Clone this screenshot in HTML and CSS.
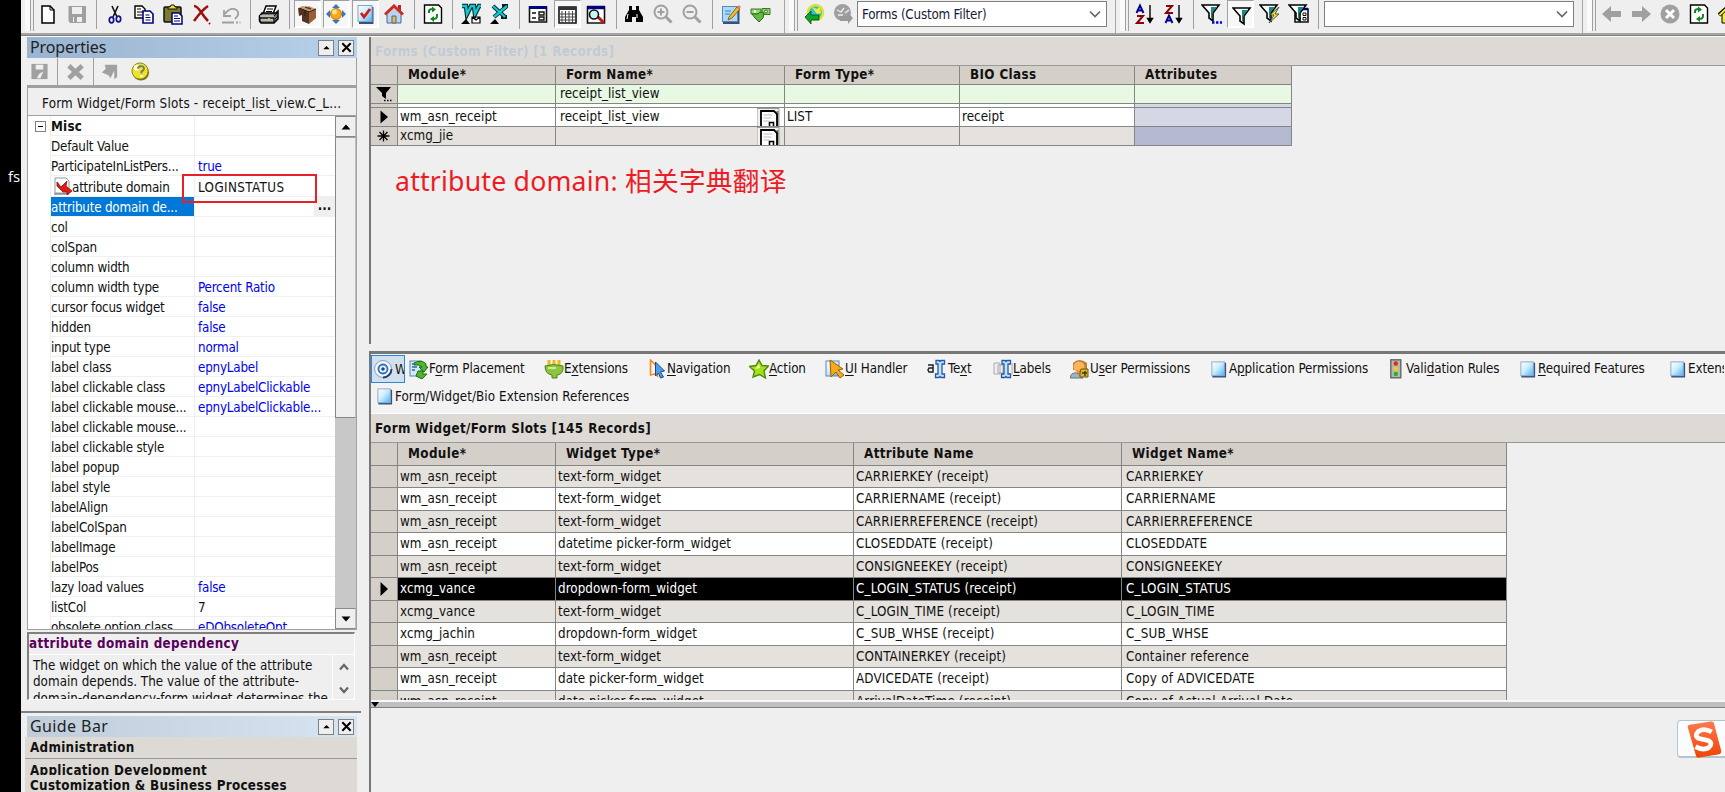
FILE: index.html
```
<!DOCTYPE html>
<html lang="en">
<head>
<meta charset="utf-8">
<title>Forms</title>
<link rel="stylesheet" href="styles.css">
</head>
<body>
<svg class="defs" width="0" height="0">
  <defs>
    <linearGradient id="sky" x1="0" y1="0" x2="1" y2="1"><stop offset="0" stop-color="#fff"/><stop offset=".45" stop-color="#cfeeff"/><stop offset="1" stop-color="#4ab4f4"/></linearGradient>
    <linearGradient id="orange" x1="0" y1="0" x2="0" y2="1"><stop offset="0" stop-color="#ff7a4a"/><stop offset="1" stop-color="#f04308"/></linearGradient>
    <symbol id="sheet" viewBox="0 0 20 20"><path d="M3 18.500h14.500V3" fill="none" stroke="#3a4f7c" stroke-width="2"/><rect x="2.500" y="2" width="14" height="15.500" fill="url(#sky)" stroke="#86a3c0"/></symbol>
    <symbol id="reload" viewBox="0 0 20 20"><path d="M1.500 1h14l3 3v15h-17z" fill="#fff" stroke="#000" stroke-width="1.400"/><path d="M6 9V7q0-2 4-2M14 10v2q0 3-4 3" fill="none" stroke="#0b8a1e" stroke-width="2"/><path d="M9 2.500l4 3-4 3zM11 12l-4 3 4 3z" fill="#0b8a1e"/></symbol>
    <symbol id="house" viewBox="0 0 20 20"><path d="M3 9v10h14V9l-7-7z" fill="#b9d4ee" stroke="#4a688d"/><path d="M1 10.500L10 2l9 8.500" fill="none" stroke="#d12a1d" stroke-width="3"/><path d="M14 1h3v6l-3-3z" fill="#b3241a"/><path d="M8 12h4v7H8z" fill="#e8b64c" stroke="#4a688d"/></symbol>
    <symbol id="funnel" viewBox="0 0 20 20"><path d="M1 2h17l-6 8v8l-4-3v-5z" fill="#fff" stroke="#000" stroke-width="1.600"/><path d="M10 4h6l-5 6v6l-1-1z" fill="#138a8a"/></symbol>
    <symbol id="note" viewBox="0 0 23 18"><path d="M0 18V.5h22V18" fill="#f2f2f2" stroke="#999"/><path d="M20.500 3v15" stroke="#777" stroke-width="2"/><path d="M4 18V3h13l3 3v12" fill="#fff" stroke="#000" stroke-width="1.800"/><path d="M6.500 7h9M6.500 10h8M6.500 13h6" stroke="#bbb"/><path d="M12.500 18v-3.500h4V18" fill="#fff" stroke="#000" stroke-width="1.600"/></symbol>
  </defs>
</svg>
<div class="desktop"><span class="desktop-label">fs</span></div>
<div class="app">
  <header class="toolbars">
    <div class="bar bar-main">
      <i class="grip"></i>
      <span class="tool"><svg viewBox="0 0 20 20"><path d="M4 2h8l4 4v13H4z" fill="#fff" stroke="#000" stroke-width="1.500"/><path d="M12 2v4h4" fill="none" stroke="#000"/></svg></span>
      <span class="tool"><svg viewBox="0 0 20 20"><path d="M1.500 2h17.500v17H3l-1.500-2z" fill="#a0a0a0"/><path d="M5 3h10v7H5z" fill="#efefef"/><path d="M6 13h9v5H6z" fill="#efefef"/><path d="M7 13h3v5H7z" fill="#a0a0a0"/></svg></span>
      <i class="sep"></i>
      <span class="tool"><svg viewBox="0 0 20 20"><path d="M7 2l5 11M13 2L8 13" stroke="#111" stroke-width="1.600"/><g fill="none" stroke="#11118c" stroke-width="1.700"><ellipse cx="6.500" cy="16" rx="2.200" ry="2.800"/><ellipse cx="13.500" cy="15" rx="2.200" ry="2.800"/></g></svg></span>
      <span class="tool"><svg viewBox="0 0 20 20"><g fill="#fff"><path d="M1 2h7l3 3v9H1z" stroke="#000" stroke-width="1.400"/><path d="M9 7h7l3 3v9H9z" stroke="#00007c" stroke-width="1.600"/></g><path d="M3 5h4M3 8h6M3 11h5" stroke="#000"/><path d="M11.500 11h4M11.500 13.500h5M11.500 16h5" stroke="#00007c"/></svg></span>
      <span class="tool"><svg viewBox="0 0 20 20"><rect x="1" y="3" width="17" height="15" rx="1" fill="#7b7b2e" stroke="#111" stroke-width="1.500"/><path d="M5 5V3h2l1-2h3l1 2h2v2z" fill="#e9e03e" stroke="#111"/><path d="M9 9h7l3 3v8H9z" fill="#fff" stroke="#00007c" stroke-width="1.500"/><path d="M11 12h4M11 14.500h6M11 17h6" stroke="#00007c"/></svg></span>
      <span class="tool"><svg viewBox="0 0 20 20"><path d="M2 2q3 0 7 6 4 6 7 9M16 2Q10 6 2 17" fill="none" stroke="#9c1010" stroke-width="2.500"/><path d="M17 19l1 1" stroke="#9c1010" stroke-width="2"/></svg></span>
      <span class="tool"><svg viewBox="0 0 20 20"><path d="M3 6v6h7M4 10q4-6 9-5 5 1 4 6l-3 4" fill="none" stroke="#a0a0a0" stroke-width="1.800"/><path d="M1 18.500h12M15 18.500h2M18.500 18.500h1" stroke="#a0a0a0" stroke-width="2"/></svg></span>
      <i class="sep"></i>
      <span class="tool"><svg viewBox="0 0 20 20"><path d="M7 2h10l-3 8H4z" fill="#fff" stroke="#000" stroke-width="1.500"/><path d="M8 5h6M7 7.500h6" stroke="#000"/><path d="M3 9h14l2-2v8l-4 4H2l-1.500-2v-5z" fill="#777" stroke="#000" stroke-width="1.500"/><path d="M1 12h14M2 16h12" stroke="#fff"/><path d="M1 14h14v4M15 12l4-4M16 15l3-3" stroke="#000" fill="none"/><circle cx="10" cy="15" r="1" fill="#e8e12c"/></svg></span>
      <i class="sep"></i>
      <span class="tool on"><svg viewBox="0 0 20 20"><path d="M1 5l4-3 5 1 2-1 7 3-7 5z" fill="#c59a72"/><path d="M1 4l4 1 7 3v12L5 17v-6l-3 1z" fill="#523423"/><path d="M12 8l7-3v9l-7 6z" fill="#9a5d35"/><path d="M2 4l10 4 7-3M8 7v5" stroke="#2e1b10" fill="none"/><path d="M8 3l6 2" stroke="#5a3a22" stroke-width="1.500"/></svg></span>
      <span class="tool on"><svg viewBox="0 0 20 20"><path d="M10 0l4 4H6zM10 20l4-4H6zM0 10l4-4v8zM20 10l-4-4v8z" fill="#3d76c0"/><circle cx="10" cy="10" r="5.500" fill="#f6a71c" stroke="#c9750a"/><circle cx="8.500" cy="8" r="2.500" fill="#ffe390"/></svg></span>
      <span class="tool on"><svg viewBox="0 0 20 20"><path d="M4 19h13.500V3" fill="none" stroke="#3a4f7c" stroke-width="2"/><rect x="3" y="1.500" width="14" height="16" fill="url(#sky)" stroke="#86a3c0"/><path d="M6 9l3 4 6-8" fill="none" stroke="#d21a16" stroke-width="2.800"/></svg></span>
      <span class="tool"><svg viewBox="0 0 20 20"><use href="#house"/></svg></span>
      <i class="sep"></i>
      <span class="tool"><svg viewBox="0 0 20 20"><use href="#reload"/></svg></span>
      <i class="sep"></i>
      <span class="tool"><svg viewBox="0 0 20 20"><path d="M1 2h4l1 8 4-8h3l1 8 4-8h2" fill="none" stroke="#022" stroke-width="4.500"/><path d="M1 2h4l1 8 4-8h3l1 8 4-8h2" fill="none" stroke="#12c6d2" stroke-width="2.400"/><path d="M5 15l4 5H0z"/><path d="M11 13h8v6h-8zM11 13l4 3 4-3" fill="#fff" stroke="#000" stroke-width="1.200"/></svg></span>
      <span class="tool"><svg viewBox="0 0 20 20"><path d="M3 2l12 11M17 2L4 13M12 2h6M11 13h6" fill="none" stroke="#022" stroke-width="4"/><path d="M3 2l12 11M17 2L4 13" stroke="#12c6d2" stroke-width="2.300"/><path d="M5 15l4 5H0z"/></svg></span>
      <i class="sep"></i>
      <span class="tool"><svg viewBox="0 0 20 20"><path d="M1.500 3h17v15h-17z" fill="#fff" stroke="#111" stroke-width="1.600"/><path d="M1 3.500h18" stroke="#00007c" stroke-width="3"/><path d="M4 9h4M4 14h4" stroke="#111" stroke-width="1.500"/><path d="M11 8h5v3h-5zM11 13h5v3h-5z" fill="none" stroke="#111" stroke-width="1.400"/></svg></span>
      <span class="tool on"><svg viewBox="0 0 20 20"><path d="M2 3h17v16H2z" fill="#fff" stroke="#111" stroke-width="1.600"/><path d="M2 4.500h17" stroke="#333" stroke-width="3"/><path d="M5 7v12M8.500 7v12M12 7v12M15.500 7v12M2 10h17M2 13h17M2 16h17" stroke="#444"/></svg></span>
      <span class="tool"><svg viewBox="0 0 20 20"><path d="M1.500 3h17v16h-17z" fill="#fff" stroke="#111" stroke-width="1.600"/><path d="M1 3.500h18" stroke="#00007c" stroke-width="3.500"/><path d="M12 13l6 6" stroke="#c01515" stroke-width="3"/><circle cx="8" cy="10.500" r="4.500" fill="#c9f5f5" stroke="#111" stroke-width="1.600"/></svg></span>
      <i class="sep"></i>
      <span class="tool"><svg viewBox="0 0 20 20"><path d="M5 2h3v4h4V2h3v4l4 7v5h-7v-5H8v5H1v-5l4-7z"/><path d="M4 10l-1 5M13 10v4" stroke="#fff"/></svg></span>
      <span class="tool"><svg viewBox="0 0 20 20"><circle cx="8" cy="8" r="6.500" fill="none" stroke="#a0a0a0" stroke-width="2"/><path d="M12.500 12.500l6 6" stroke="#a0a0a0" stroke-width="3"/><path d="M8 4.500v7M4.500 8h7" stroke="#a0a0a0" stroke-width="2"/></svg></span>
      <span class="tool"><svg viewBox="0 0 20 20"><circle cx="8" cy="8" r="6.500" fill="none" stroke="#a0a0a0" stroke-width="2"/><path d="M12.500 12.500l6 6" stroke="#a0a0a0" stroke-width="3"/><path d="M4.500 8h7" stroke="#a0a0a0" stroke-width="2"/></svg></span>
      <i class="sep"></i>
      <span class="tool"><svg viewBox="0 0 20 20"><path d="M2 19h15.500V4" fill="none" stroke="#3a4f7c" stroke-width="2"/><rect x="1.500" y="2.500" width="15" height="15" fill="#a9dcfa" stroke="#5b87b8"/><path d="M4 7h6M4 10h5" stroke="#397cc0"/><path d="M8 13L16 3l3 2-8 9-4 2z" fill="#f3b72c" stroke="#77500a" stroke-width=".8"/><path d="M16 3l2-2 2 2-1.500 2z" fill="#ed7b8a"/></svg></span>
      <span class="tool"><svg viewBox="0 0 20 20"><path d="M1 5h10v5H1zM12 4.500h8v6h-8z" fill="#8dd86e" stroke="#3a7526"/><circle cx="16" cy="7.500" r="1.500" fill="#e6f8b8" stroke="#3a7526"/><path d="M2 10h6l2-2 4 1-1 5-4 4-4-4z" fill="#63b943" stroke="#2f6a1e"/><circle cx="5" cy="7.500" r="1.300" fill="#efffe0"/></svg></span>
    </div>
    <div class="bar bar-view">
      <i class="grip"></i>
      <span class="tool"><svg viewBox="0 0 20 20"><circle cx="11.500" cy="8.500" r="7.500" fill="#29c6d2" stroke="#e4e02b" stroke-width="2.500"/><path d="M8 3l5 2 3-2 1 6-4 1-3-4z" fill="#efe93b"/><path d="M1 13l6-6v4h8v5H7v4z" fill="#12a32c" stroke="#064d10" stroke-width=".8"/></svg></span>
      <span class="tool"><svg viewBox="0 0 20 20"><circle cx="9.500" cy="8.500" r="8.500" fill="#a0a0a0"/><path d="M4 6l4 2 3-4M12 9l4-3M5 11h5" stroke="#eee" stroke-width="1.300" fill="none"/><path d="M20 14l-5-5v3H7v5h8v3z" fill="#999"/></svg></span>
      <div class="combo"><span>Forms (Custom Filter)</span><svg class="chev" viewBox="0 0 12 8"><path d="M1 1.500l5 5 5-5" fill="none" stroke="#666" stroke-width="1.700"/></svg></div>
    </div>
    <div class="bar bar-filter">
      <i class="grip"></i>
      <span class="tool"><svg viewBox="0 0 20 20"><path d="M1.500 9L5 1.500 8.500 9M3 6.500h4" fill="none" stroke="#00008c" stroke-width="1.900"/><path d="M2 12h6l-6 7h7" fill="none" stroke="#8c0000" stroke-width="2"/><path d="M15 1v15M12.500 14.500l2.500 4 2.500-4z" stroke="#000" stroke-width="1.400"/></svg></span>
      <span class="tool"><svg viewBox="0 0 20 20"><path d="M2 2h6L2 9h7" fill="none" stroke="#8c0000" stroke-width="2"/><path d="M1.500 19L5 11.500 8.500 19M3 16.500h4" fill="none" stroke="#00008c" stroke-width="1.900"/><path d="M15 1v15M12.500 14.500l2.500 4 2.500-4z" stroke="#000" stroke-width="1.400"/></svg></span>
      <i class="sep"></i>
      <span class="tool"><svg viewBox="0 0 20 20"><svg x="-1" y="-1" width="18" height="17"><use href="#funnel"/></svg><path d="M10 18.500h2.500M14 18.500h2.500M18 18.500h2" stroke="#00e" stroke-width="2.500"/></svg></span>
      <span class="tool on"><svg viewBox="0 0 20 20"><svg x="1" y="2" width="18" height="17"><use href="#funnel"/></svg></svg></span>
      <span class="tool"><svg viewBox="0 0 20 20"><svg x="-1" y="-1" width="14" height="14"><use href="#funnel"/></svg><path d="M19 3l-9 8h4l-5 8 10-9h-4z" fill="#f5ec21" stroke="#444" stroke-width=".9"/></svg></span>
      <span class="tool"><svg viewBox="0 0 20 20"><path d="M6 5h13v13H6z" fill="#fff" stroke="#111" stroke-width="1.600"/><path d="M6 5h13" stroke="#00007c" stroke-width="2.500"/><path d="M8 10h4M8 14.500h4" stroke="#111"/><path d="M14 9h3v2.500h-3zM14 13.500h3V16h-3z" fill="none" stroke="#111"/><svg x="-1" y="-1" width="14" height="14"><use href="#funnel"/></svg></svg></span>
      <i class="sep"></i>
      <div class="combo"><span></span><svg class="chev" viewBox="0 0 12 8"><path d="M1 1.500l5 5 5-5" fill="none" stroke="#666" stroke-width="1.700"/></svg></div>
    </div>
    <div class="bar bar-nav">
      <i class="grip"></i>
      <span class="tool"><svg viewBox="0 0 20 20"><path d="M0 10l9-8v5h10v6H9v5z" fill="#a0a0a0"/></svg></span>
      <span class="tool"><svg viewBox="0 0 20 20"><path d="M20 10l-9-8v5H1v6h10v5z" fill="#a0a0a0"/></svg></span>
      <span class="tool"><svg viewBox="0 0 20 20"><circle cx="10" cy="10" r="9.500" fill="#a0a0a0"/><path d="M6 6l8 8M14 6l-8 8" stroke="#fff" stroke-width="3"/></svg></span>
      <span class="tool"><svg viewBox="0 0 20 20"><use href="#reload"/></svg></span>
      <span class="tool"><svg viewBox="0 0 20 20"><path d="M4 10v9h13v-9l-6-7z" fill="#f2ea2c" stroke="#000"/><path d="M1 11l10-9 9 9" fill="none" stroke="#000" stroke-width="4"/><path d="M1.500 11l9.500-9 9 9" fill="none" stroke="#f2ea2c" stroke-width="2"/></svg></span>
    </div>
  </header>

  <div class="body">
    <aside class="side">
      <section class="props">
        <div class="caption caption-active"><span>Properties</span><b class="cap-btn"><svg viewBox="0 0 14 14"><path d="M3.500 9L7 5.500 10.500 9z"/></svg></b><b class="cap-btn"><svg viewBox="0 0 14 14"><path d="M2.500 2.500l9 9M11.500 2.500l-9 9" stroke="#000" stroke-width="2.200"/></svg></b></div>
        <div class="mini">
          <span class="m1"><svg viewBox="0 0 20 20"><path d="M1.500 2h17v16h-17z" fill="#a0a0a0"/><path d="M6 3h8v5H6zM10 12l4-2-3 7H7z" fill="#efefef"/></svg></span>
          <span class="m2"><svg viewBox="0 0 20 20"><path d="M3 4l14 13M17 4L3 17" stroke="#a0a0a0" stroke-width="5"/></svg></span>
          <span class="m3"><svg viewBox="0 0 20 20"><path d="M5 3h13v13l-3 2V9l-4 8-2-3-7-3 4-4z" fill="#a0a0a0"/></svg></span>
          <span class="m4"><svg viewBox="0 0 20 20"><circle cx="10.500" cy="11" r="8.500" fill="#7a7418"/><circle cx="9.500" cy="9.500" r="8.500" fill="#eee32a" stroke="#8b841c"/><circle cx="6" cy="6" r="3" fill="#fffcd0"/><path d="M7 7q2-4 6-2 2 3-2 5v2" fill="none" stroke="#777" stroke-width="2"/><circle cx="11" cy="15" r="1.400" fill="#fff"/></svg></span>
        </div>
        <div class="sheet">
          <div class="sheet-title">Form Widget/Form Slots - receipt_list_view.C_L...</div>
          <div class="sheet-body">
            <div class="rows">
              <div class="row group"><i class="exp"></i><span class="k">Misc</span><span class="v"></span></div>
              <div class="row"><span class="k">Default Value</span><span class="v"></span></div>
              <div class="row"><span class="k">ParticipateInListPers...</span><span class="v blue">true</span></div>
              <div class="row tall"><span class="k"><svg class="dom" viewBox="0 0 18 18"><path d="M1 1h11l3 3v12H1z" fill="#fff" stroke="#8f9aa8"/><path d="M0 17h15" stroke="#556"/><path d="M3 5l4 5 6-6-1 5 6 5-5 4v-3H9L3 9z" fill="#e01b16" stroke="#8b0f0c" stroke-width=".8"/></svg>attribute domain</span><span class="v caps">LOGINSTATUS</span><em class="mark"></em></div>
              <div class="row sel"><span class="k">attribute domain de...</span><span class="v"></span><b class="more">...</b></div>
              <div class="row"><span class="k">col</span><span class="v"></span></div>
              <div class="row"><span class="k">colSpan</span><span class="v"></span></div>
              <div class="row"><span class="k">column width</span><span class="v"></span></div>
              <div class="row"><span class="k">column width type</span><span class="v blue">Percent Ratio</span></div>
              <div class="row"><span class="k">cursor focus widget</span><span class="v blue">false</span></div>
              <div class="row"><span class="k">hidden</span><span class="v blue">false</span></div>
              <div class="row"><span class="k">input type</span><span class="v blue">normal</span></div>
              <div class="row"><span class="k">label class</span><span class="v blue">epnyLabel</span></div>
              <div class="row"><span class="k">label clickable class</span><span class="v blue">epnyLabelClickable</span></div>
              <div class="row"><span class="k">label clickable mouse...</span><span class="v blue">epnyLabelClickable...</span></div>
              <div class="row"><span class="k">label clickable mouse...</span><span class="v"></span></div>
              <div class="row"><span class="k">label clickable style</span><span class="v"></span></div>
              <div class="row"><span class="k">label popup</span><span class="v"></span></div>
              <div class="row"><span class="k">label style</span><span class="v"></span></div>
              <div class="row"><span class="k">labelAlign</span><span class="v"></span></div>
              <div class="row"><span class="k">labelColSpan</span><span class="v"></span></div>
              <div class="row"><span class="k">labelImage</span><span class="v"></span></div>
              <div class="row"><span class="k">labelPos</span><span class="v"></span></div>
              <div class="row"><span class="k">lazy load values</span><span class="v blue">false</span></div>
              <div class="row"><span class="k">listCol</span><span class="v">7</span></div>
              <div class="row"><span class="k">obsolete option class</span><span class="v blue">eDObsoleteOpt</span></div>
            </div>
            <div class="scroll"><b class="sb"><svg viewBox="0 0 10 6"><path d="M.5 5.500L5 .5l4.500 5z"/></svg></b><b class="thumb"></b><b class="sb down"><svg viewBox="0 0 10 6"><path d="M.5.5L5 5.500 9.500.5z"/></svg></b></div>
          </div>
        </div>
        <div class="help">
          <div class="help-title">attribute domain dependency</div>
          <div class="help-body"><div class="help-text">The widget on which the value of the attribute<br>domain depends. The value of the attribute-<br>domain-dependency-form widget determines the</div>
          <div class="spin"><svg viewBox="0 0 10 8"><path d="M1 6.500L5 2l4 4.500" fill="none" stroke="#666" stroke-width="2.200"/></svg><svg viewBox="0 0 10 8"><path d="M1 1.500L5 6l4-4.500" fill="none" stroke="#666" stroke-width="2.200"/></svg></div></div>
        </div>
      </section>
      <section class="guide">
        <div class="caption caption-idle"><span>Guide Bar</span><b class="cap-btn"><svg viewBox="0 0 14 14"><path d="M3.500 9L7 5.500 10.500 9z"/></svg></b><b class="cap-btn"><svg viewBox="0 0 14 14"><path d="M2.500 2.500l9 9M11.500 2.500l-9 9" stroke="#000" stroke-width="2.200"/></svg></b></div>
        <div class="g-item">Administration</div>
        <div class="g-item g-cut">Application Development</div>
        <div class="g-item g-last">Customization &amp; Business Processes</div>
      </section>
    </aside>

    <main class="main">
      <section class="pane pane-top">
        <h2 class="pane-title faded">Forms (Custom Filter) [1 Records]</h2>
        <div class="table forms">
          <div class="tr head"><span></span><span>Module*</span><span>Form Name*</span><span>Form Type*</span><span>BIO Class</span><span>Attributes</span></div>
          <div class="tr filter"><span class="ind"><svg viewBox="0 0 18 16"><path d="M1 1h15l-5 6v6L7 10V7z"/><path d="M9 14.500h1.500M12 14.500h1.500M15 14.500h1.500" stroke="#000" stroke-width="1.500"/></svg></span><span></span><span>receipt_list_view</span><span></span><span></span><span></span></div>
          <div class="tr thin"><span></span><span></span><span></span><span></span><span></span><span class="at1"></span></div>
          <div class="tr"><span class="ind"><svg viewBox="0 0 18 16"><path d="M5.500 1.500L13 8l-7.500 6.500z"/></svg></span><span>wm_asn_receipt</span><span>receipt_list_view<svg class="note"><use href="#note"/></svg></span><span>LIST</span><span>receipt</span><span class="at1"></span></div>
          <div class="tr alt"><span class="ind"><svg viewBox="0 0 18 16"><path d="M8.500 2.500v11M2.500 8h12M4.500 4l8 8M12.500 4l-8 8" stroke="#000" stroke-width="1.300"/></svg></span><span>xcmg_jie</span><span><svg class="note"><use href="#note"/></svg></span><span></span><span></span><span class="at2"></span></div>
        </div>
        <p class="remark">attribute domain: <span>相关字典翻译</span></p>
      </section>
      <section class="pane pane-bottom">
        <nav class="tabs">
          <span class="tab cur"><svg viewBox="0 0 20 20"><circle cx="10" cy="10" r="8.500" fill="#eef5fb" stroke="#7fa3c8"/><path d="M10 18.500A8.500 8.500 0 0 0 18.500 10" fill="none" stroke="#27407a" stroke-width="2"/><circle cx="10" cy="10" r="4.500" fill="#eef5fb" stroke="#2d6db5" stroke-width="1.800"/><circle cx="10" cy="10" r="1.800" fill="#174a8c"/></svg>W</span>
          <span class="tab t-place"><svg viewBox="0 0 20 20"><rect x="1" y="2" width="11" height="15" fill="#cfe8fa" stroke="#5b87b8"/><path d="M3 5h6M3 8h5M3 11h3" stroke="#2f68a5" stroke-width="1.500"/><path d="M5 4q8-4 12 1v3h2l-4 5-5-5h3q-2-3-8-2zM9 12h5v3h4l-5 5-6-3z" fill="#4fb52b" stroke="#21681a"/></svg><span>F<u>o</u>rm Placement</span></span>
          <span class="tab t-ext"><svg viewBox="0 0 20 20"><path d="M5 1v7M10 1v6M15 1v7" stroke="#f2b51c" stroke-width="3"/><path d="M1 7q8-3 18 0 1 8-6 9v3H8v-3Q1 15 1 7z" fill="#8cc63f" stroke="#4c8020"/><path d="M4 9h8" stroke="#e6f8b8" stroke-width="1.500"/></svg><span>E<u>x</u>tensions</span></span>
          <span class="tab t-nav"><svg viewBox="2 0 17 20"><path d="M3 1l7 7v9l-3-2-4 1z" fill="#fff2df" stroke="#f08a24" stroke-width="1.600"/><path d="M8 3l9 9-4 1 3 5-3 1-2-5-3 3z" fill="#4da0e8" stroke="#174a8c"/></svg><span><u>N</u>avigation</span></span>
          <span class="tab t-act"><svg viewBox="0 0 20 20"><path d="M10 1l3 5.500 6.500.5-4.500 5 1.500 7-6-3.500L4 18l1.500-6L.5 7.500 7 6.500z" fill="#a6df1c" stroke="#4e8a12" stroke-width="1.400"/><path d="M10 5l1 4-5 1z" fill="#efffa0"/></svg><span><u>A</u>ction</span></span>
          <span class="tab t-ui"><svg viewBox="0 0 20 20"><rect x="1" y="2" width="13" height="15" fill="url(#sky)" stroke="#5b87b8"/><path d="M5 1l13 9-5 1 6 5-4 3-4-6-5 5z" fill="#f9a91a" stroke="#99600b"/></svg><span><u>U</u>I Handler</span></span>
          <span class="tab t-text"><svg viewBox="0 0 20 20"><path d="M1 6h5v7H2l-1-2 1-2h4" fill="none" stroke="#222" stroke-width="1.500"/><path d="M9 1.500h3l1 1 1-1h3.500V5H15v10h2.500v3.500H14l-1-1-1 1H8.500V15H11V5H9z" fill="#c6e4ff" stroke="#2459a5" stroke-width="1.300"/></svg><span>Te<u>x</u>t</span></span>
          <span class="tab t-lab"><svg viewBox="0 0 20 20"><path d="M1 4h6v11H1zM5 6h5v8H5z" fill="#eee" stroke="#aaa"/><path d="M9 1.500h3l1 1 1-1h3.500V5H15v10h2.500v3.500H14l-1-1-1 1H8.500V15H11V5H9z" fill="#c6e4ff" stroke="#2459a5" stroke-width="1.300"/><path d="M19 4v12" stroke="#aaa"/></svg><span><u>L</u>abels</span></span>
          <span class="tab t-user"><svg viewBox="0 0 20 20"><path d="M0 19q1-6 7-5l6 5z" fill="#9db6c4" stroke="#5c7784"/><path d="M3 4q6-6 14 0v7H3z" fill="#b9852e"/><circle cx="9" cy="8" r="5.500" fill="#ffb45c"/><path d="M6 11l3 6 3-5z" fill="#f28a2a"/><path d="M11 10h7v8h-8v-4z" fill="#d9b53a" stroke="#6c5211"/><path d="M12 14h5M15 12v5" stroke="#43350b" stroke-width="1.400"/></svg><span>U<u>s</u>er Permissions</span></span>
          <span class="tab t-app"><svg viewBox="1.500 0 18 20"><use href="#sheet" width="20" height="20"/></svg><span>A<u>p</u>plication Permissions</span></span>
          <span class="tab t-val"><svg viewBox="0 0 12 20"><rect x=".8" y=".8" width="10" height="18" fill="#b7b7b0" stroke="#666" stroke-width="1.400"/><circle cx="5.800" cy="4.500" r="2.200" fill="#e0281a"/><circle cx="5.800" cy="9.700" r="2.200" fill="#f0cf22"/><circle cx="5.800" cy="15" r="2.200" fill="#22b52c"/></svg><span>Vali<u>d</u>ation Rules</span></span>
          <span class="tab t-req"><svg viewBox="1.500 0 18 20"><use href="#sheet" width="20" height="20"/></svg><span><u>R</u>equired Features</span></span>
          <span class="tab t-more"><svg viewBox="1.500 0 18 20"><use href="#sheet" width="20" height="20"/></svg><span>Extensions</span></span>
          <span class="tab t-refs"><svg viewBox="1.500 0 18 20"><use href="#sheet" width="20" height="20"/></svg><span>For<u>m</u>/Widget/Bio Extension References</span></span>
        </nav>
        <h2 class="pane-title">Form Widget/Form Slots [145 Records]</h2>
        <div class="table slots">
          <div class="tr head"><span></span><span>Module*</span><span>Widget Type*</span><span>Attribute Name</span><span>Widget Name*</span></div>
          <div class="tr alt"><span></span><span>wm_asn_receipt</span><span>text-form_widget</span><span>CARRIERKEY (receipt)</span><span>CARRIERKEY</span></div>
          <div class="tr"><span></span><span>wm_asn_receipt</span><span>text-form_widget</span><span>CARRIERNAME (receipt)</span><span>CARRIERNAME</span></div>
          <div class="tr alt"><span></span><span>wm_asn_receipt</span><span>text-form_widget</span><span>CARRIERREFERENCE (receipt)</span><span>CARRIERREFERENCE</span></div>
          <div class="tr"><span></span><span>wm_asn_receipt</span><span>datetime picker-form_widget</span><span>CLOSEDDATE (receipt)</span><span>CLOSEDDATE</span></div>
          <div class="tr alt"><span></span><span>wm_asn_receipt</span><span>text-form_widget</span><span>CONSIGNEEKEY (receipt)</span><span>CONSIGNEEKEY</span></div>
          <div class="tr picked"><span class="ind"><svg viewBox="0 0 18 16"><path d="M5.500 1L13 8l-7.500 7z"/></svg></span><span>xcmg_vance</span><span>dropdown-form_widget</span><span>C_LOGIN_STATUS (receipt)</span><span>C_LOGIN_STATUS</span></div>
          <div class="tr alt"><span></span><span>xcmg_vance</span><span>text-form_widget</span><span>C_LOGIN_TIME (receipt)</span><span>C_LOGIN_TIME</span></div>
          <div class="tr"><span></span><span>xcmg_jachin</span><span>dropdown-form_widget</span><span>C_SUB_WHSE (receipt)</span><span>C_SUB_WHSE</span></div>
          <div class="tr alt"><span></span><span>wm_asn_receipt</span><span>text-form_widget</span><span>CONTAINERKEY (receipt)</span><span>Container reference</span></div>
          <div class="tr"><span></span><span>wm_asn_receipt</span><span>date picker-form_widget</span><span>ADVICEDATE (receipt)</span><span>Copy of ADVICEDATE</span></div>
          <div class="tr alt"><span></span><span>wm_asn_receipt</span><span>date picker-form_widget</span><span>ArrivalDateTime (receipt)</span><span>Copy of Actual Arrival Date</span></div>
        </div>
        <div class="splitter"><svg viewBox="0 0 8 5"><path d="M0 0h8L4 5z"/></svg></div>
      </section>
    </main>
  </div>
</div>
<div class="ime"><svg viewBox="0 0 42 40"><path d="M3 7q-1-2 2-3L27 .5q3-.5 3.500 2L38 31q.5 3-2 4L15 38.500q-3 .5-3.500-2z" fill="url(#orange)"/><path d="M28 11.500Q20 7 14 11q-5 5 1 7.500l9 2q6 3 1 7.500-6 3.500-14-1" fill="none" stroke="#fff" stroke-width="5"/></svg></div>
</body>
</html>
```
FILE: styles.css
```
* { box-sizing: border-box; }
html, body { margin: 0; height: 100%; overflow: hidden; }
body {
  display: flex;
  height: 792px;
  background: #efefef;
  color: #111;
  font-family: "DejaVu Sans Condensed", "DejaVu Sans", "Noto Sans CJK SC", sans-serif;
  font-stretch: condensed;
  font-size: 13.3px;
  letter-spacing: -0.2px;
  white-space: nowrap;
}
svg { display: block; flex: none; }
.defs { position: absolute; }

.desktop { flex: none; width: 21px; background: #000; color: #fff; padding: 166px 0 0 8px; overflow: hidden; }
.desktop-label { display: block; font: 15px/20px "Open Sans", sans-serif; letter-spacing: 0; }
.app { flex: 1; min-width: 0; display: flex; flex-direction: column; }

/* toolbars */
.toolbars { flex: none; height: 37px; display: flex; overflow: hidden; border-bottom: 1px solid #fafafa; box-shadow: inset 0 -1px #808080, inset 0 -3px #a5a5a5; }
.bar { flex: none; display: flex; height: 33px; padding-left: 4px; border-right: 1px solid #a8a8a8; }
.bar-main { width: 764px; }
.bar-view { width: 331px; }
.bar-filter { width: 467px; }
.bar-nav { border: 0; }
.grip { flex: none; width: 9px; height: 31px; border: solid #a0a0a0; border-width: 0 1px; box-shadow: inset 4px 0 #fafafa, inset 5px 0 #a0a0a0; border-left-color: #fafafa; margin-right: 1px; }
.bar-main .grip { margin-right: -1px; }
.tool { flex: none; width: 29px; height: 28px; display: flex; justify-content: center; align-items: center; }
.tool svg { width: 20px; height: 20px; overflow: visible; }
.tool.on { background: #f7f7f7; border: 1px solid #fff; border-color: #a0a0a0 #fff #fff #a0a0a0; box-shadow: inset -1px -1px #fff; width: 27px; margin: 0 1px; }
.sep { flex: none; width: 9.25px; height: 29px; background: linear-gradient(#a0a0a0, #a0a0a0) 5px 0 / 1px 100% no-repeat; }
.combo { flex: none; width: 250px; height: 26px; margin-top: 1px; border: 1px solid #7f7f7f; background: #fff; display: flex; align-items: center; justify-content: space-between; padding: 0 5px 0 4px; color: #1a1a3a; }
.combo .chev { width: 12px; height: 8px; }
.bar-filter .combo { margin-left: 1px; }

.body { flex: 1; min-height: 0; display: flex; }

/* left column */
.side { flex: none; width: 340px; display: flex; flex-direction: column; overflow: hidden; }
.props { flex: none; height: 676px; padding-left: 6px; border-bottom: 2px solid #808080; }
.caption { display: flex; align-items: center; gap: 4px; width: 330px; height: 21px; padding: 0 3px; font: 16px/20px "Noto Sans", sans-serif; letter-spacing: -.15px; color: #222; }
.caption span { flex: 1; margin-top: -1px; }
.caption-active { background: linear-gradient(90deg, #99b4d1, #b9d1ea); }
.caption-idle { background: linear-gradient(90deg, #bfcddb, #d7e4f2); }
.cap-btn { width: 16px; height: 16px; border: 1px solid #808080; background: #efefef; display: grid; place-items: center; }
.cap-btn svg { width: 13px; height: 13px; }
.mini { width: 330px; height: 29px; display: flex; border: solid #a0a0a0; border-width: 0 1px 2px 0; }
.mini span { display: flex; align-items: center; justify-content: center; border-right: 1px solid #a0a0a0; }
.mini svg { width: 19px; height: 19px; }
.m1 { width: 31px; padding-right: 5px; }
.m2 { width: 36px; }
.mini .m3 { width: 31px; border: 0; }
.mini .m4 { width: 31px; border: 0; }
.sheet { width: 330px; height: 543px; border: 1px solid #a0a0a0; display: flex; flex-direction: column; }
.sheet-title { height: 28px; line-height: 31px; padding-left: 14px; border-bottom: 1px solid #a0a0a0; letter-spacing: .22px; }
.sheet-body { flex: 1; min-height: 0; display: flex; background: #fff; overflow: hidden; }
.rows { flex: 1; min-width: 0; padding-left: 22px; }
.row { position: relative; height: 20px; line-height: 21px; display: flex; border: solid #efefef; border-width: 0 0 1px 1px; }
.row.tall { height: 21px; line-height: 24px; }
.tall .k { display: flex; padding-left: 3px; }
.k { flex: none; width: 144px; border-right: 1px solid #efefef; overflow: hidden; }
.v { padding-left: 3px; }
.caps { letter-spacing: .4px; }
.blue { color: #0000f0; }
.group { font-weight: bold; letter-spacing: .2px; }
.exp { position: absolute; left: -16px; top: 5px; width: 11px; height: 11px; border: 1px solid #808080; background: linear-gradient(#000, #000) 2px 4px / 5px 1px no-repeat #fff; }
.dom { width: 18px; height: 18px; margin-top: 1px; }
.mark { position: absolute; left: 131px; top: -2px; width: 135px; height: 29px; border: 2px solid #e8202a; z-index: 1; }
.sel .k { background: #0078d7; color: #fff; }
.more { margin-left: auto; width: 21px; background: #efefef; text-align: center; line-height: 17px; letter-spacing: 0; }
.scroll { flex: none; width: 21px; background: #c8c8c8; display: flex; flex-direction: column; }
.sb, .thumb { border: 1px solid #888; border-right-color: #c0c0c0; background: #efefef; }
.sb { height: 21px; display: grid; place-items: center; }
.sb svg { width: 10px; height: 6px; }
.thumb { height: 281px; border-top-color: #a0a0a0; }
.down { margin-top: auto; }
.help { margin-top: 2px; width: 328px; height: 68px; border: 1px solid #fff; border-top: 2px solid #808080; border-left: 2px solid #808080; overflow: hidden; }
.help-title { height: 21px; line-height: 20px; font-weight: bold; color: #58005c; border-bottom: 1px solid #fff; letter-spacing: .35px; }
.help-body { display: flex; height: 44px; overflow: hidden; }
.help-text { width: 304px; flex: none; padding-left: 4px; line-height: 16.300px; padding-top: 3px; border-right: 1px solid #fff; letter-spacing: .02px; }
.spin { flex: 1; display: flex; flex-direction: column; align-items: center; justify-content: space-between; padding: 8px 0 5px; }
.spin svg { width: 10px; height: 8px; }
.guide { padding: 3px 0 0 4px; }
.guide .caption { margin-left: 2px; height: 21px; letter-spacing: .4px; }
.g-item { width: 332px; height: 22px; line-height: 22px; padding-left: 5px; background: #dddad5; border-bottom: 1px solid #999; font-weight: bold; overflow: hidden; letter-spacing: .3px; }
.g-cut { height: 16px; line-height: 24px; border: 0; }
.g-last { height: 20px; line-height: 22px; border: 0; }

/* right column */
.main { flex: 1; min-width: 0; margin-left: 8px; display: flex; flex-direction: column; }
.pane { border-left: 2px solid #777; }
.pane-top { height: 307px; }
.pane-title { margin: 0; height: 28px; line-height: 29px; font-size: 13.3px; padding-left: 4px; background: #dddad5; letter-spacing: .4px; }
.faded { color: #c1cbd7; line-height: 30px; letter-spacing: .3px; }
.table { border-top: 1px solid #999; letter-spacing: .05px; }
.tr { display: grid; }
.tr > span { position: relative; border: solid #858585; border-width: 0 1px 1px 0; padding-left: 4px; background: #fff; overflow: hidden; }
.tr > span:nth-child(2) { padding-left: 2px; }
.tr > span:nth-child(n+4) { padding-left: 2px; }
.tr.alt > span { background: #e5e2de; }
.tr.filter > span { background: #e7f8e3; }
.tr > span:first-child, .tr.head > span { background: #d4cfc8; }
.tr.head > span { font-weight: bold; padding-left: 10px; letter-spacing: .38px; }
.tr > span:first-child { padding: 0; display: grid; place-items: center; }
.ind svg { width: 18px; height: 16px; }
.forms .tr { grid-template-columns: 27px 158px 229px 175px 175px 157px; height: 19px; line-height: 18px; }
.forms .thin { height: 4px; }
.tr > .at1 { background: #d4d8e5; }
.tr.alt > .at2 { background: #b4b9d0; }
.note { position: absolute; right: 4px; top: 0; width: 23px; height: 18px; }
.remark { margin: 13px 0 0 24px; font: 26.670px/42px "Noto Sans", "Noto Sans CJK SC", sans-serif; color: #ed1c24; letter-spacing: .2px; }
.remark span { font-family: "Noto Sans CJK SC", sans-serif; letter-spacing: .3px; }

.pane-bottom { flex: 1; margin-top: 7px; border-top: 3px solid #777; }
.tabs { height: 60px; background: #f3f3f3; border-bottom: 1px solid #fff; display: flex; flex-wrap: wrap; align-content: flex-start; overflow: hidden; width: 1354px; letter-spacing: -.1px; }
.tab { flex: none; height: 29px; display: flex; align-items: center; overflow: hidden; }
.tab svg { width: 20px; height: 20px; }
.tab u { text-underline-offset: 2px; }
.cur { width: 34px; height: 28px; margin-right: 4px; margin-top: 1px; border: 1px solid #2e86d8; background: #d2dfec; padding-left: 1px; gap: 2px; }
.t-place { width: 135px; }
.t-ext { width: 105px; }
.t-nav { width: 100px; }
.t-nav svg { width: 18px; }
.t-act { width: 76px; }
.t-ui { width: 102px; }
.t-text { width: 66px; gap: 1px; }
.t-lab { width: 77px; }
.t-user { width: 141px; }
.t-app { width: 179px; }
.t-val { width: 130px; gap: 4px; }
.t-val svg { width: 12px; }
.t-req { width: 150px; }
.t-more { width: 54px; }
.t-app svg, .t-req svg, .t-more svg, .t-refs svg { width: 16px; height: 18px; }
.t-app, .t-req, .t-more { gap: 2px; }
.t-refs { padding-left: 6px; gap: 2px; height: 26px; letter-spacing: .07px; }
.slots { height: 258px; overflow: hidden; }
.slots .tr { grid-template-columns: 27px 158px 298px 268px 385px; height: 22.500px; line-height: 21px; }
.slots .tr > span:nth-child(3) { padding-left: 2px; }
.slots .tr > span:nth-child(4) { letter-spacing: .15px; }
.slots .tr > span:nth-child(5) { padding-left: 4px; letter-spacing: .2px; }
.slots .tr.head > span:nth-child(n+2) { padding-left: 10px; letter-spacing: .38px; }
.slots .tr.picked > span:nth-child(n+2) { background: #000; color: #fff; }
.splitter { height: 8px; border-top: 2px solid #f8f8f8; border-bottom: 1px solid #808080; background: #c0c0c0; }
.splitter svg { width: 8px; height: 5px; }

.ime { position: absolute; left: 1677px; top: 720px; width: 60px; height: 38px; border: 1px solid #b5c5d0; border-bottom-width: 2px; border-radius: 4px; background: #fbfcfd; padding-left: 6px; }
.ime svg { width: 42px; height: 38px; }
```
